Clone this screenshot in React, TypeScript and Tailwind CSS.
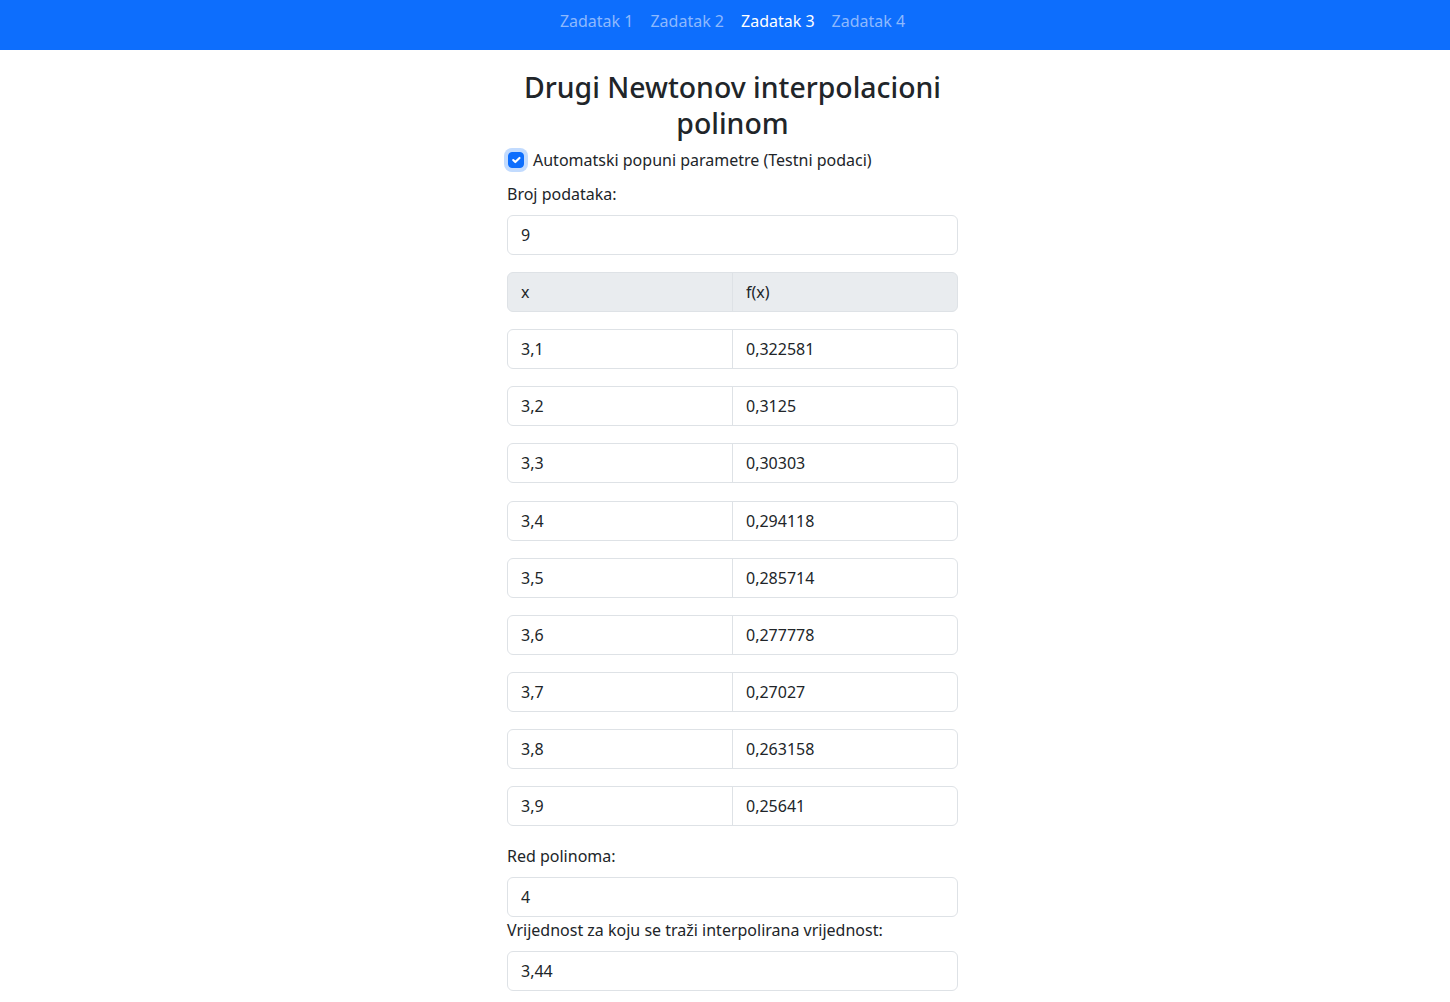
import { useState } from "react";

const tabs = ["Zadatak 1", "Zadatak 2", "Zadatak 3", "Zadatak 4"];

const rows: [string, string][] = [
  ["3,1", "0,322581"],
  ["3,2", "0,3125"],
  ["3,3", "0,30303"],
  ["3,4", "0,294118"],
  ["3,5", "0,285714"],
  ["3,6", "0,277778"],
  ["3,7", "0,27027"],
  ["3,8", "0,263158"],
  ["3,9", "0,25641"],
];

const field =
  "h-[40px] w-full rounded-[6px] border border-[#dee2e6] bg-white px-[13px] text-[16px] leading-6 text-[#212529] outline-none";

const PairRow = ({ x, fx, header = false }: { x: string; fx: string; header?: boolean }) => (
  <div
    className={
      "flex h-[40px] w-full overflow-hidden rounded-[6px] border border-[#dee2e6] " +
      (header ? "bg-[#e9ecef]" : "bg-white")
    }
  >
    <input
      readOnly
      value={x}
      className="h-full w-[224px] bg-transparent px-[13px] text-[16px] leading-6 text-[#212529] outline-none"
    />
    <input
      readOnly
      value={fx}
      className="h-full flex-1 border-l border-[#dee2e6] bg-transparent px-[13px] text-[16px] leading-6 text-[#212529] outline-none"
    />
  </div>
);

const App = () => {
  const [active, setActive] = useState(2);
  const [auto, setAuto] = useState(true);

  return (
    <div className="min-h-screen bg-white font-['Noto_Sans','Open_Sans',sans-serif] text-[#212529]">
      <nav className="flex h-[50px] justify-center bg-[#0d6efd] pl-[15px] pt-[9px]">
        <ul className="flex gap-[17px] text-[16px] leading-6">
          {tabs.map((t, i) => (
            <li key={t}>
              <button
                onClick={() => setActive(i)}
                className={active === i ? "text-white" : "text-[#8db9fe]"}
              >
                {t}
              </button>
            </li>
          ))}
        </ul>
      </nav>

      <main className="flex justify-center pl-[15px]">
        <div className="flex w-[451px] flex-col pb-[11px] pt-[19px]">
          <h2 className="flex flex-col items-center whitespace-nowrap text-[28.4px] font-medium leading-[36px]">
            <span>Drugi Newtonov interpolacioni</span>
            <span>polinom</span>
          </h2>

          <label className="mt-[7px] flex h-6 items-center gap-[9px] text-[16px]">
            <button
              onClick={() => setAuto(!auto)}
              className={
                "ml-px flex h-4 w-4 items-center justify-center rounded-[4px] border shadow-[0_0_0_4px_rgba(13,110,253,0.25)] " +
                (auto ? "border-[#0d6efd] bg-[#0d6efd]" : "border-[#86b7fe] bg-white")
              }
            >
              {auto && (
                <svg viewBox="0 0 20 20" className="h-4 w-4">
                  <path
                    d="M6 10l3 3l6-6"
                    fill="none"
                    stroke="white"
                    strokeWidth="3"
                    strokeLinecap="round"
                    strokeLinejoin="round"
                  />
                </svg>
              )}
            </button>
            Automatski popuni parametre (Testni podaci)
          </label>

          <label className="mt-[10px] text-[16px] leading-6">Broj podataka:</label>
          <input readOnly value="9" className={field + " mt-[9px]"} />

          <div className="mt-[17px] flex flex-col gap-[17.15px]">
            <PairRow x="x" fx="f(x)" header />
            {rows.map(([x, fx]) => (
              <PairRow key={x} x={x} fx={fx} />
            ))}
          </div>

          <label className="mt-[18px] text-[16px] leading-6">Red polinoma:</label>
          <input readOnly value="4" className={field + " mt-[9px]"} />

          <label className="mt-px text-[16px] leading-6">
            Vrijednost za koju se traži interpolirana vrijednost:
          </label>
          <input readOnly value="3,44" className={field + " mt-[9px]"} />
        </div>
      </main>
    </div>
  );
};

export default App;
